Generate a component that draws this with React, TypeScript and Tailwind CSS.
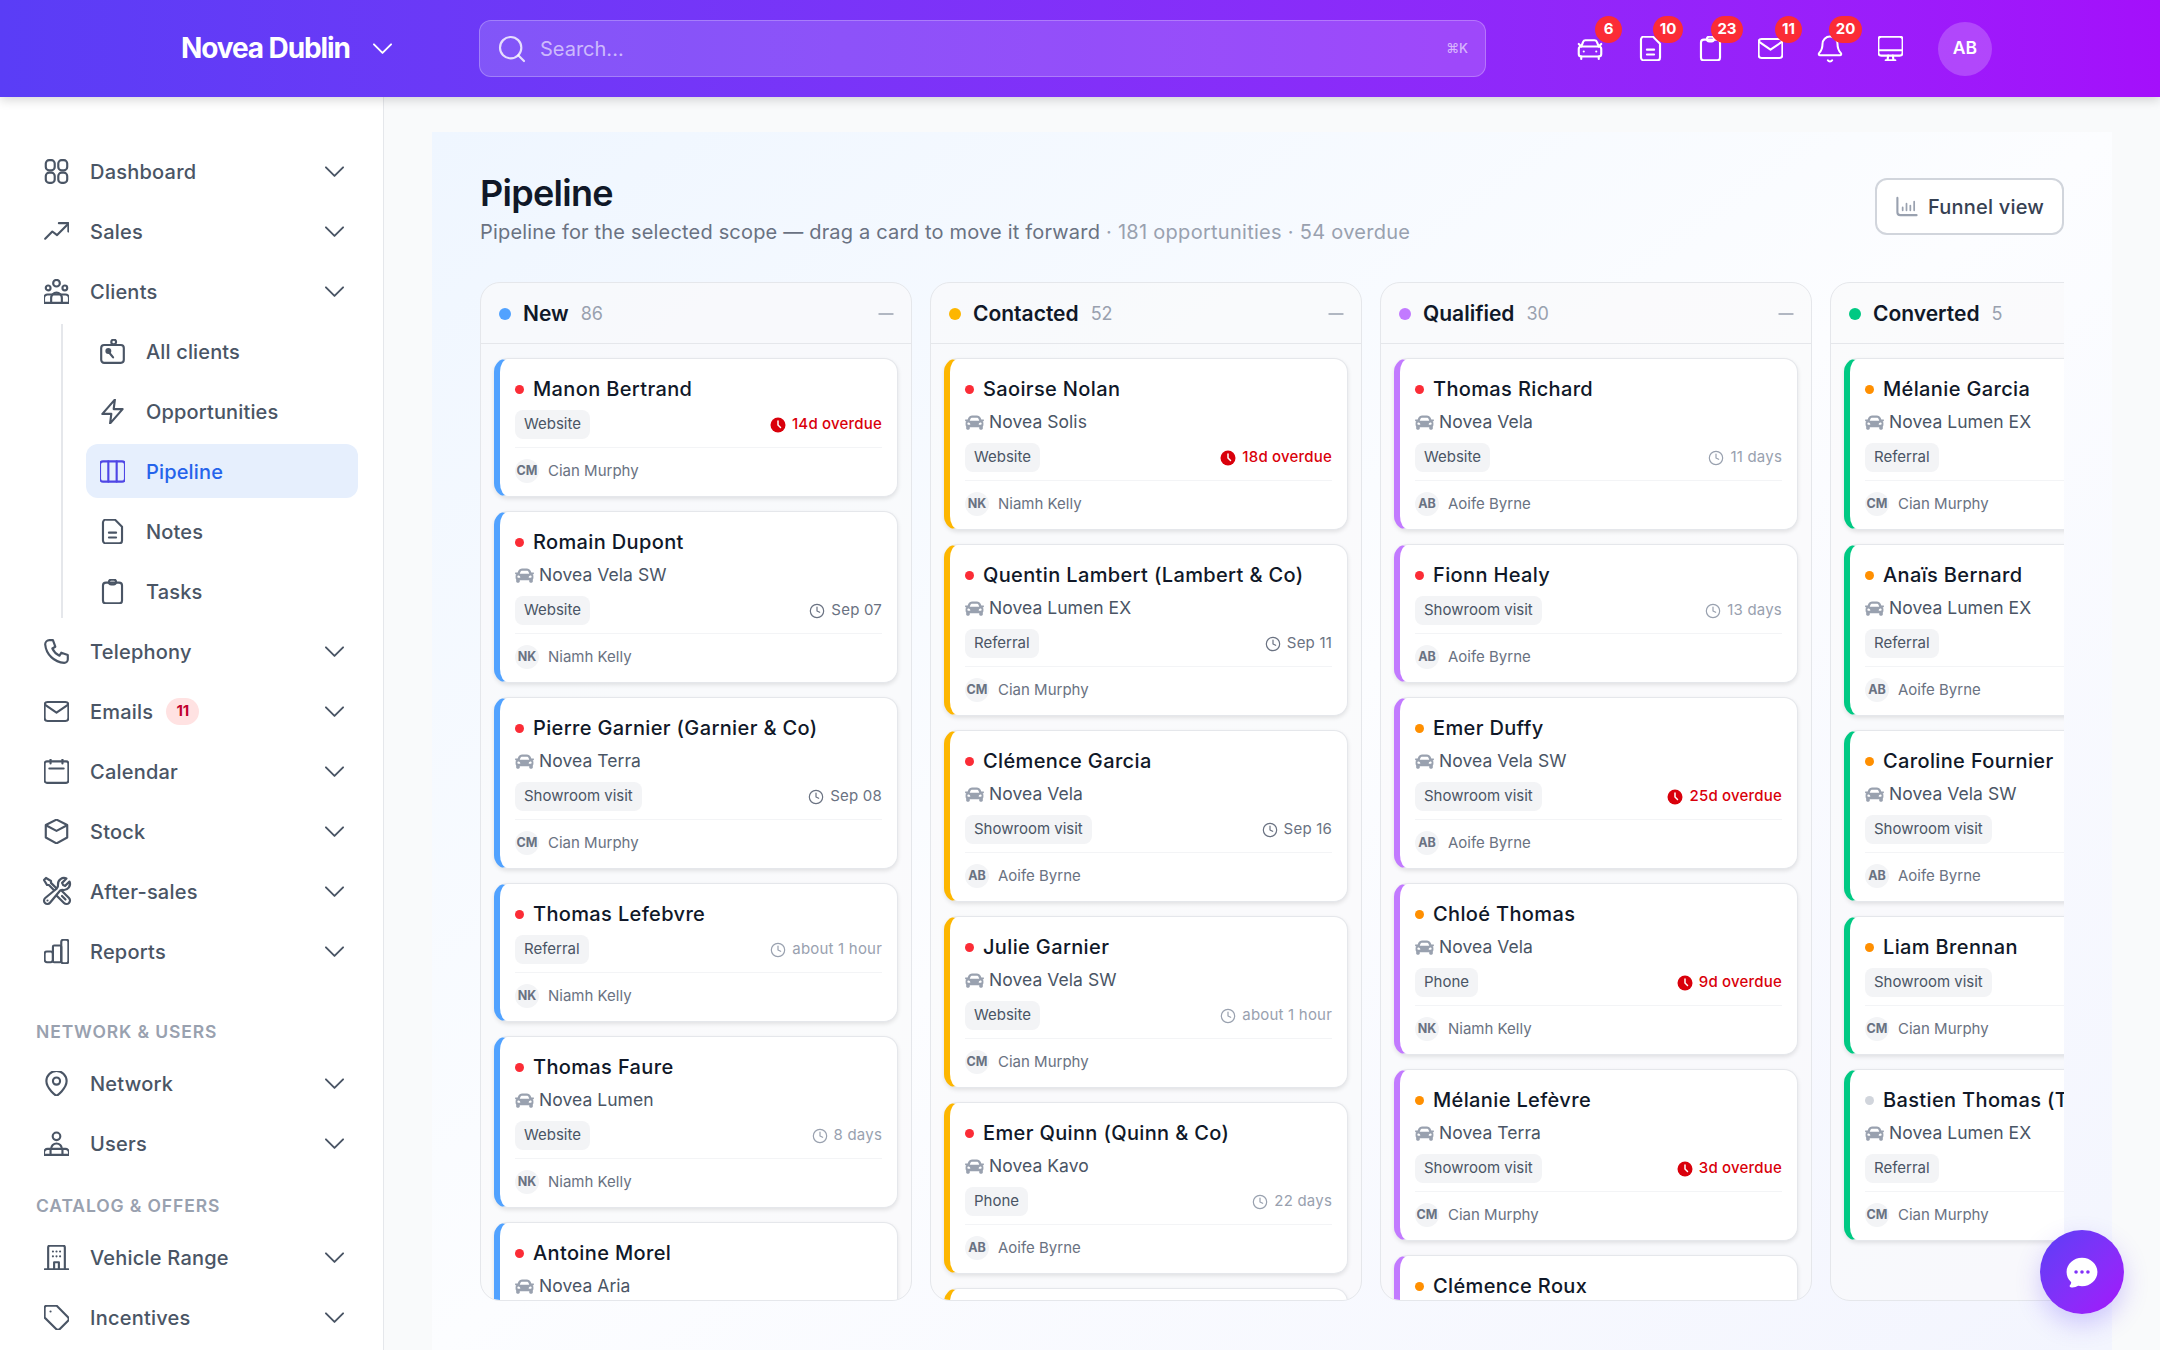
import React from 'react';
import { Bell, CarFront, Clock, Search, Minus } from 'lucide-react';
import { FaCar } from 'react-icons/fa';
import { HiChatBubbleOvalLeftEllipsis, HiOutlineWrenchScrewdriver } from 'react-icons/hi2';

const Svg = ({ size = 25, width = 1.8, children }: { size?: number; width?: number; children: React.ReactNode }) => (
  <svg
    xmlns="http://www.w3.org/2000/svg"
    viewBox="1.5 1.5 21 21"
    width={size}
    height={size}
    fill="none"
    stroke="currentColor"
    strokeWidth={width}
    strokeLinecap="round"
    strokeLinejoin="round"
    className="shrink-0"
  >
    {children}
  </svg>
);

const Chevron = () => (
  <Svg size={25} width={1.6}>
    <path d="M4.800 8.500l7.200 7.200 7.200-7.200" />
  </Svg>
);

// Nav icons
const DashboardIcon = () => (
  <Svg>
    <rect x="3" y="2.500" width="7.500" height="8.500" rx="2.800" />
    <rect x="13.500" y="2.500" width="7.500" height="8.500" rx="2.800" />
    <rect x="3" y="13" width="7.500" height="8.500" rx="2.800" />
    <rect x="13.500" y="13" width="7.500" height="8.500" rx="2.800" />
  </Svg>
);
const SalesIcon = () => (
  <Svg>
    <path d="M2.500 18l6-6 4 3 9-9" />
    <path d="M14 5h8v7" />
  </Svg>
);
const ClientsIcon = () => (
  <Svg>
    <circle cx="12" cy="5" r="2.800" />
    <circle cx="5" cy="9" r="2" />
    <circle cx="19" cy="9" r="2" />
    <path d="M1.500 21.500v-4a3 3 0 0 1 3-3h15a3 3 0 0 1 3 3v4z" />
    <path d="M7.500 21.500v-4a4.500 4.500 0 0 1 9 0v4" />
  </Svg>
);
const AllClientsIcon = () => (
  <Svg>
    <rect x="2.500" y="6.500" width="19" height="15" rx="2.500" />
    <circle cx="13" cy="4" r="2" />
    <circle cx="8.500" cy="11.500" r="1.600" fill="currentColor" />
    <path d="M8.500 12l4 5" />
  </Svg>
);
const BoltIcon = () => (
  <Svg>
    <path d="M14 2 3.500 14H11l-1 8 10.500-12H13z" />
  </Svg>
);
const PipelineIcon = () => (
  <Svg>
    <rect x="1.500" y="3.500" width="21" height="17" rx="2.500" />
    <path d="M8.500 3.500v17M15.500 3.500v17" />
  </Svg>
);
const NoteIcon = ({ size }: { size?: number }) => (
  <Svg size={size}>
    <path d="M7 2h7l6 6v11.500a2.500 2.500 0 0 1-2.500 2.500h-10.500A2.500 2.500 0 0 1 4 19.500v-15A2.500 2.500 0 0 1 7 2z" />
    <path d="M9 13h6M9 17h6" />
  </Svg>
);
const ClipboardIcon = ({ size }: { size?: number }) => (
  <Svg size={size}>
    <rect x="4" y="4.500" width="16" height="17.500" rx="2.500" />
    <rect x="9" y="2" width="6" height="4" rx="2" />
  </Svg>
);
const PhoneIcon = () => (
  <Svg>
    <path d="M6 2.500h3l2 5.500-2.500 1.500a12 12 0 0 0 6 6l1.500-2.500 5.500 2v3.500a3 3 0 0 1-3 3A17 17 0 0 1 2.500 6 3.500 3.500 0 0 1 6 2.500z" />
  </Svg>
);
const MailIcon = ({ size }: { size?: number }) => (
  <Svg size={size}>
    <rect x="2" y="4" width="20" height="16" rx="2.500" />
    <path d="M2.500 6.500 12 13l9.500-6.500" />
  </Svg>
);
const CalendarIcon = () => (
  <Svg>
    <rect x="2" y="3.500" width="20" height="18" rx="2" />
    <path d="M7 1.800v3.500M17 1.800v3.500M6 9.500h12" />
  </Svg>
);
const CubeIcon = () => (
  <Svg>
    <path d="M12 2l9 4.500v10.500l-9 5-9-5V6.500z" />
    <path d="M3.500 7 12 11.500 20.500 7" />
  </Svg>
);
const ReportsIcon = () => (
  <Svg>
    <rect x="2" y="12" width="7" height="9" rx="2" />
    <rect x="9" y="7" width="7" height="14" rx="1" />
    <rect x="16" y="2" width="6" height="20" rx="2" />
  </Svg>
);
const PinIcon = () => (
  <Svg>
    <path d="M12 22.500s-8.500-6-8.500-12.500a8.500 8.500 0 0 1 17 0c0 6.500-8.500 12.500-8.500 12.500z" />
    <circle cx="12" cy="10" r="3" />
  </Svg>
);
const UsersIcon = () => (
  <Svg>
    <circle cx="12" cy="6" r="3.200" />
    <path d="M1.500 21.500v-2a3 3 0 0 1 3-3h15a3 3 0 0 1 3 3v2z" />
    <path d="M7.500 16.500a4.500 4.500 0 0 1 9 0M7 17v4M17 17v4" />
  </Svg>
);
const BuildingIcon = () => (
  <Svg>
    <path d="M5 22V3.500A1.500 1.500 0 0 1 6.500 2h11A1.500 1.500 0 0 1 19 3.500V22" />
    <path d="M2 22h20M9 7h.01M12 7h.01M15 7h.01M9 11h.01M12 11h.01M15 11h.01M10 22v-6h4v6" />
  </Svg>
);
const TagIcon = () => (
  <Svg>
    <path d="M2 4a2 2 0 0 1 2-2h8l9.500 9.500a2.500 2.500 0 0 1 0 3.500l-6.500 6.500a2.500 2.500 0 0 1-3.500 0L2 12z" />
    <path d="M7 7h.01" />
  </Svg>
);
const MonitorIcon = ({ size }: { size?: number }) => (
  <Svg size={size}>
    <rect x="1.800" y="2" width="20.400" height="16" rx="2.500" />
    <path d="M1.800 13.500h20.400M10 18l-.5 4M14 18l.5 4M8 22h8" />
  </Svg>
);

const OverdueClock = () => (
  <svg viewBox="0 0 16 16" width="16" height="16" className="shrink-0">
    <circle cx="8" cy="8" r="7.500" fill="#d9000b" />
    <path d="M8 4v4l2.500 2.500" stroke="#fff" strokeWidth="1.500" fill="none" strokeLinecap="round" />
  </svg>
);

const FunnelIcon = () => (
  <svg viewBox="0 0 24 24" width="23" height="23" fill="none" className="shrink-0">
    <path d="M2.500 3v15a3 3 0 0 0 3 3h17" stroke="#99a1af" strokeWidth="2.200" strokeLinecap="round" />
    <path d="M8 13v3M12 9v7M16 11v5M20 7v9" stroke="#99a1af" strokeWidth="1.800" strokeLinecap="round" />
  </svg>
);

type NavEntry = { label: string; icon: React.ReactNode; badge?: string };

const NavRow = ({ label, icon, badge }: NavEntry) => (
  <div className="flex h-[54px] items-center gap-[21px] rounded-xl pl-[14px] pr-[11px] text-[#4a5565]">
    {icon}
    <span className="pt-[1px] text-[20px] font-medium tracking-[0.22px]">{label}</span>
    {badge && (
      <span className="-ml-[8px] flex h-[27px] w-[33px] items-center justify-center rounded-full bg-[#ffe2e2] text-[15px] font-bold text-[#c10030]">
        {badge}
      </span>
    )}
    <span className="ml-auto">
      <Chevron />
    </span>
  </div>
);

const SubRow = ({ label, icon, active }: { label: string; icon: React.ReactNode; active?: boolean }) => (
  <div
    className={
      active
        ? 'flex h-[54px] items-center gap-[21px] rounded-xl bg-[#e6effd] pl-[14px] text-[#2563eb]'
        : 'flex h-[54px] items-center gap-[21px] rounded-xl pl-[14px] text-[#4a5565]'
    }
  >
    <span className={active ? 'text-[#4f46e5]' : ''}>{icon}</span>
    <span className="pt-[1px] text-[20px] font-medium tracking-[0.15px]">{label}</span>
  </div>
);

const Sidebar = () => (
  <aside className="flex w-[384px] shrink-0 flex-col gap-[6px] overflow-hidden border-r border-[#e5e7eb] bg-white pl-[30px] pr-[25px] pt-[47px]">
    <NavRow label="Dashboard" icon={<DashboardIcon />} />
    <NavRow label="Sales" icon={<SalesIcon />} />
    <NavRow label="Clients" icon={<ClientsIcon />} />
    <div className="ml-[31px] flex flex-col gap-[6px] border-l-2 border-[#e5e7eb] pl-[23px]">
      <SubRow label="All clients" icon={<AllClientsIcon />} />
      <SubRow label="Opportunities" icon={<BoltIcon />} />
      <SubRow label="Pipeline" icon={<PipelineIcon />} active />
      <SubRow label="Notes" icon={<NoteIcon />} />
      <SubRow label="Tasks" icon={<ClipboardIcon />} />
    </div>
    <NavRow label="Telephony" icon={<PhoneIcon />} />
    <NavRow label="Emails" icon={<MailIcon />} badge="11" />
    <NavRow label="Calendar" icon={<CalendarIcon />} />
    <NavRow label="Stock" icon={<CubeIcon />} />
    <NavRow
      label="After-sales"
      icon={<HiOutlineWrenchScrewdriver size={32} strokeWidth={1.65} className="-mx-[3.5px] shrink-0" />}
    />
    <NavRow label="Reports" icon={<ReportsIcon />} />
    <div className="mb-[6px] mt-[36px] h-[24px] pl-[6px] text-[17.5px] font-semibold leading-[24px] tracking-[0.875px] text-[#99a1af]">
      NETWORK &amp; USERS
    </div>
    <NavRow label="Network" icon={<PinIcon />} />
    <NavRow label="Users" icon={<UsersIcon />} />
    <div className="mb-[6px] mt-[18px] h-[24px] pl-[6px] text-[17.5px] font-semibold leading-[24px] tracking-[0.875px] text-[#99a1af]">
      CATALOG &amp; OFFERS
    </div>
    <NavRow label="Vehicle Range" icon={<BuildingIcon />} />
    <NavRow label="Incentives" icon={<TagIcon />} />
  </aside>
);

const topIcons = [
  { icon: <CarFront size={30} strokeWidth={1.7} />, badge: '6', w: 'w-[27px]', left: 'left-[27px]' },
  { icon: <NoteIcon size={25} />, badge: '10', w: 'w-[30px]', left: 'left-[25px]' },
  { icon: <ClipboardIcon size={25} />, badge: '23', w: 'w-[32px]', left: 'left-[23px]' },
  { icon: <MailIcon size={25} />, badge: '11', w: 'w-[27px]', left: 'left-[27px]' },
  { icon: <Bell size={30} strokeWidth={1.6} />, badge: '20', w: 'w-[33px]', left: 'left-[21px]' },
  { icon: <MonitorIcon size={25} /> },
];

const Header = () => (
  <header className="relative z-10 flex h-[97px] shrink-0 items-center bg-gradient-to-r from-[#5a3df6] to-[#a40ffb] shadow-[0_3px_10px_rgba(0,0,0,0.16)]">
    <div className="flex w-[479px] shrink-0 items-center pl-[181px] text-white">
      <span className="pb-[2px] text-[28px] font-bold tracking-[-1.1px]">Novea Dublin</span>
      <span className="ml-[20px]">
        <Chevron />
      </span>
    </div>
    <div className="flex h-[57px] w-[1007px] shrink-0 items-center rounded-xl border border-white/25 bg-white/15 pl-[16px] pr-[17px]">
      <Search size={32} strokeWidth={1.6} className="shrink-0 text-white/80" />
      <span className="ml-[12px] text-[20px] text-white/60">Search...</span>
      <span className="ml-auto text-[13px] font-medium text-white/60">⌘K</span>
    </div>
    <div className="ml-[82px] flex items-center gap-[16px] text-white">
      {topIcons.map((t, i) => (
        <div key={i} className="relative flex h-[44px] w-[44px] items-center justify-center">
          {t.icon}
          {t.badge && (
            <span
              className={`absolute -top-[11px] flex h-[27px] items-center justify-center rounded-full bg-[#fb2c36] text-[15px] font-bold text-white ${t.w} ${t.left}`}
            >
              {t.badge}
            </span>
          )}
        </div>
      ))}
    </div>
    <div className="ml-[26px] flex h-[54px] w-[54px] items-center justify-center rounded-full bg-white/20 text-[17.5px] font-semibold text-white">
      AB
    </div>
  </header>
);

type Owner = 'CM' | 'NK' | 'AB';
const owners: Record<Owner, string> = { CM: 'Cian Murphy', NK: 'Niamh Kelly', AB: 'Aoife Byrne' };

type Lead = {
  name: string;
  dot: 'red' | 'orange' | 'gray';
  site?: string;
  source: string;
  when?: string;
  owner: Owner;
};

const dotClass = { red: 'bg-[#fb2c36]', orange: 'bg-[#ff8f00]', gray: 'bg-[#d1d5dc]' };

const When = ({ value }: { value: string }) => {
  if (value.includes('overdue')) {
    return (
      <span className="flex items-center gap-[6px] text-[15px] font-medium tracking-[0.2px] text-[#d9000b]">
        <OverdueClock />
        {value}
      </span>
    );
  }
  const soft = value.includes('day') || value.includes('hour');
  return (
    <span className={soft ? 'flex items-center gap-[6px] text-[15px] tracking-[0.2px] text-[#99a1af]' : 'flex items-center gap-[6px] text-[15px] tracking-[0.2px] text-[#6a7282]'}>
      <Clock size={16} strokeWidth={1.8} className="shrink-0" />
      {value}
    </span>
  );
};

const LeadCard = ({ lead, accent }: { lead: Lead; accent: string }) => (
  <article className={`shrink-0 rounded-[14px] border border-l-[6px] border-[#e5e7eb] bg-white pb-[13px] pl-[15px] pr-[15px] pt-[15px] shadow-[0_2px_4px_rgba(0,0,0,0.1)] ${accent}`}>
    <div className="flex h-[30px] items-center gap-[9px]">
      <span className={`h-[9px] w-[9px] shrink-0 rounded-full ${dotClass[lead.dot]}`} />
      <span className="whitespace-nowrap text-[20px] font-medium tracking-[0.36px] text-[#101828]">{lead.name}</span>
    </div>
    {lead.site && (
      <div className="mt-[3px] flex h-[30px] items-center gap-[5px] text-[17.5px] tracking-[0.05px] text-[#4a5565]">
        <FaCar size={19} className="shrink-0 text-[#99a1af]" />
        {lead.site}
      </div>
    )}
    <div className="mt-[6px] flex h-[29px] items-center justify-between">
      <span className="flex h-[29px] items-center rounded-lg bg-[#f3f4f6] px-[9px] text-[15px] text-[#4a5565]">{lead.source}</span>
      {lead.when && <When value={lead.when} />}
    </div>
    <div className="mt-[8px] flex items-center gap-[9px] border-t border-[#f3f4f6] pt-[11px]">
      <span className="flex h-[24px] w-[24px] shrink-0 items-center justify-center rounded-full bg-[#f3f4f6] text-[12.5px] font-bold text-[#6a7282]">
        {lead.owner}
      </span>
      <span className="text-[15px] text-[#6a7282]">{owners[lead.owner]}</span>
    </div>
  </article>
);

type Stage = { title: string; count: number; dot: string; accent: string; leads: Lead[] };

const stages: Stage[] = [
  {
    title: 'New',
    count: 86,
    dot: 'bg-[#51a2ff]',
    accent: 'border-l-[#51a2ff]',
    leads: [
      { name: 'Manon Bertrand', dot: 'red', source: 'Website', when: '14d overdue', owner: 'CM' },
      { name: 'Romain Dupont', dot: 'red', site: 'Novea Vela SW', source: 'Website', when: 'Sep 07', owner: 'NK' },
      { name: 'Pierre Garnier (Garnier & Co)', dot: 'red', site: 'Novea Terra', source: 'Showroom visit', when: 'Sep 08', owner: 'CM' },
      { name: 'Thomas Lefebvre', dot: 'red', source: 'Referral', when: 'about 1 hour', owner: 'NK' },
      { name: 'Thomas Faure', dot: 'red', site: 'Novea Lumen', source: 'Website', when: '8 days', owner: 'NK' },
      { name: 'Antoine Morel', dot: 'red', site: 'Novea Aria', source: 'Website', owner: 'NK' },
    ],
  },
  {
    title: 'Contacted',
    count: 52,
    dot: 'bg-[#fdb600]',
    accent: 'border-l-[#fdb600]',
    leads: [
      { name: 'Saoirse Nolan', dot: 'red', site: 'Novea Solis', source: 'Website', when: '18d overdue', owner: 'NK' },
      { name: 'Quentin Lambert (Lambert & Co)', dot: 'red', site: 'Novea Lumen EX', source: 'Referral', when: 'Sep 11', owner: 'CM' },
      { name: 'Clémence Garcia', dot: 'red', site: 'Novea Vela', source: 'Showroom visit', when: 'Sep 16', owner: 'AB' },
      { name: 'Julie Garnier', dot: 'red', site: 'Novea Vela SW', source: 'Website', when: 'about 1 hour', owner: 'CM' },
      { name: 'Emer Quinn (Quinn & Co)', dot: 'red', site: 'Novea Kavo', source: 'Phone', when: '22 days', owner: 'AB' },
      { name: '', dot: 'red', source: 'Website', owner: 'CM' },
    ],
  },
  {
    title: 'Qualified',
    count: 30,
    dot: 'bg-[#c27aff]',
    accent: 'border-l-[#c27aff]',
    leads: [
      { name: 'Thomas Richard', dot: 'red', site: 'Novea Vela', source: 'Website', when: '11 days', owner: 'AB' },
      { name: 'Fionn Healy', dot: 'red', source: 'Showroom visit', when: '13 days', owner: 'AB' },
      { name: 'Emer Duffy', dot: 'orange', site: 'Novea Vela SW', source: 'Showroom visit', when: '25d overdue', owner: 'AB' },
      { name: 'Chloé Thomas', dot: 'orange', site: 'Novea Vela', source: 'Phone', when: '9d overdue', owner: 'NK' },
      { name: 'Mélanie Lefèvre', dot: 'orange', site: 'Novea Terra', source: 'Showroom visit', when: '3d overdue', owner: 'CM' },
      { name: 'Clémence Roux', dot: 'orange', source: 'Website', owner: 'AB' },
    ],
  },
  {
    title: 'Converted',
    count: 5,
    dot: 'bg-[#00c983]',
    accent: 'border-l-[#00c983]',
    leads: [
      { name: 'Mélanie Garcia', dot: 'orange', site: 'Novea Lumen EX', source: 'Referral', owner: 'CM' },
      { name: 'Anaïs Bernard', dot: 'orange', site: 'Novea Lumen EX', source: 'Referral', owner: 'AB' },
      { name: 'Caroline Fournier', dot: 'orange', site: 'Novea Vela SW', source: 'Showroom visit', owner: 'AB' },
      { name: 'Liam Brennan', dot: 'orange', source: 'Showroom visit', owner: 'CM' },
      { name: 'Bastien Thomas (Thomas & Co)', dot: 'gray', site: 'Novea Lumen EX', source: 'Referral', owner: 'CM' },
    ],
  },
];

const Column = ({ stage }: { stage: Stage }) => (
  <section className="flex w-[432px] shrink-0 flex-col overflow-hidden rounded-[20px] border border-[#e5e7eb] bg-[#f9fafb]/70">
    <div className="flex h-[61px] shrink-0 items-center border-b border-[#e5e7eb] pl-[18px] pr-[13px] pt-[1px]">
      <span className={`h-[12px] w-[12px] rounded-full ${stage.dot}`} />
      <span className="ml-[12px] text-[21px] font-semibold text-[#101828]">{stage.title}</span>
      <span className="ml-[12px] text-[18px] text-[#99a1af]">{stage.count}</span>
      {stage.title !== 'Converted' && <Minus size={24} strokeWidth={1.4} className="ml-auto text-[#99a1af]" />}
    </div>
    <div className="flex flex-1 flex-col gap-[14px] overflow-hidden px-[13px] pt-[14px]">
      {stage.leads.map((lead, i) => (
        <LeadCard key={i} lead={lead} accent={stage.accent} />
      ))}
    </div>
  </section>
);

export default function App() {
  return (
    <div className="flex h-screen w-full flex-col overflow-hidden bg-[#f9fafb] font-['Inter',sans-serif]">
      <Header />
      <div className="flex min-h-0 flex-1">
        <Sidebar />
        <main className="flex min-w-0 flex-1 flex-col px-[48px] pt-[35px]">
          <div className="flex min-h-0 flex-1 flex-col bg-gradient-to-br from-[#eff6ff] via-[#fcfdff] to-[#f3f5fe] px-[48px] pb-[49px] pt-[40px]">
            <div className="flex h-[110px] shrink-0 items-start justify-between">
              <div>
                <h1 className="text-[36px] font-semibold leading-[42px] tracking-[-0.7px] text-[#101828]">Pipeline</h1>
                <p className="mt-[4px] text-[20px] leading-[28px] tracking-[0.18px] text-[#6a7282]">
                  Pipeline for the selected scope — drag a card to move it forward
                  <span className="tracking-[0.28px] text-[#99a1af]"> · 181 opportunities · 54 overdue</span>
                </p>
              </div>
              <button className="mt-[6px] flex h-[57px] w-[189px] items-center gap-[10px] rounded-xl border-2 border-[#d1d5dc] bg-white pl-[18px] text-[20px] font-medium tracking-[0.2px] text-[#364153]">
                <FunnelIcon />
                Funnel view
              </button>
            </div>
            <div className="flex min-h-0 flex-1 gap-[18px] overflow-hidden">
              {stages.map((s) => (
                <Column key={s.title} stage={s} />
              ))}
            </div>
          </div>
        </main>
      </div>
      <button className="fixed bottom-[36px] right-[36px] z-20 flex h-[84px] w-[84px] items-center justify-center rounded-full bg-gradient-to-br from-[#5a3df6] to-[#a40ffb] text-white shadow-[0_10px_25px_rgba(90,61,246,0.25)]">
        <HiChatBubbleOvalLeftEllipsis size={38} />
      </button>
    </div>
  );
}
